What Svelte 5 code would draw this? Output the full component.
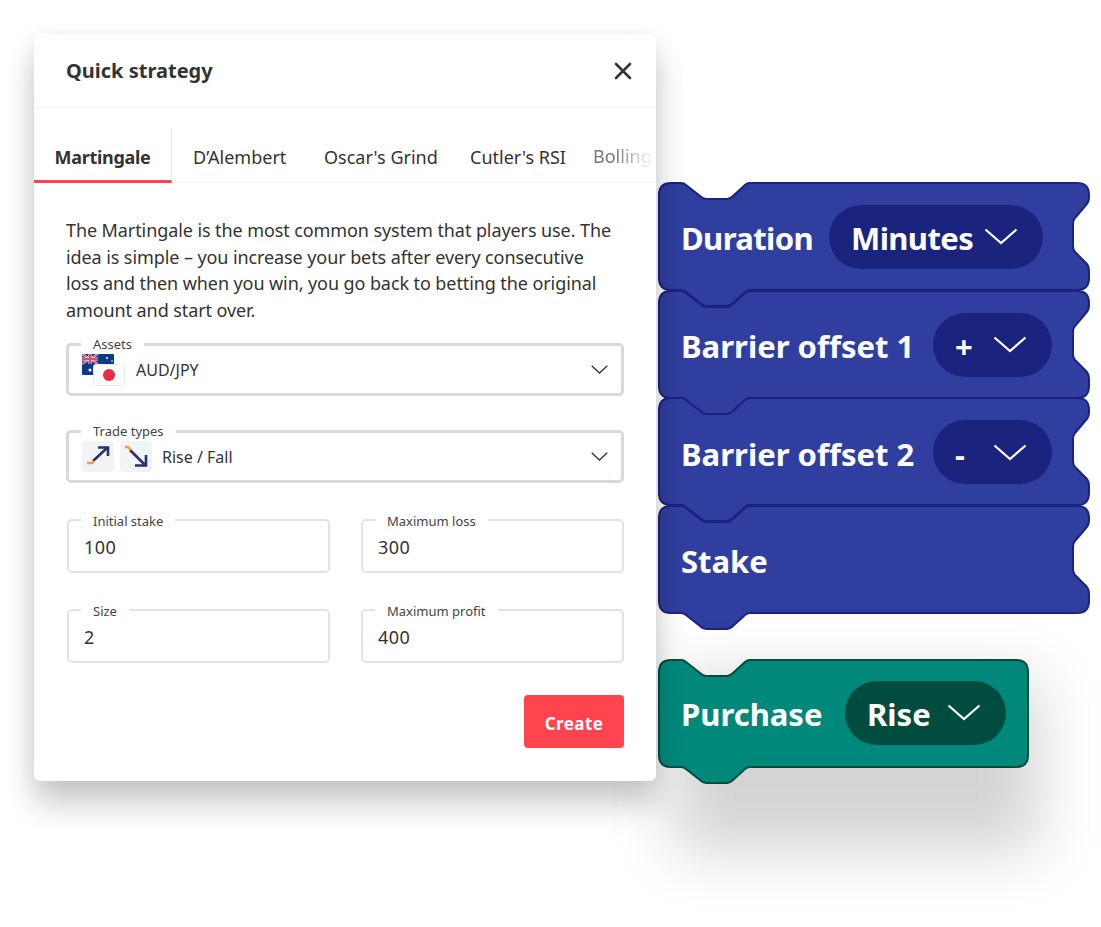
<script>
  const tabs = ["D’Alembert", "Oscar's Grind", "Cutler's RSI"]
  const inputs = [
    { label: 'Initial stake', value: '100' },
    { label: 'Maximum loss', value: '300' },
    { label: 'Size', value: '2' },
    { label: 'Maximum profit', value: '400' }
  ]
  const blocks = [
    { label: 'Duration', pick: 'Minutes', labelWidth: 148, pickWidth: 214, tight: true },
    { label: 'Barrier offset 1', pick: '+', labelWidth: 252, pickWidth: 119 },
    { label: 'Barrier offset 2', pick: '-', labelWidth: 252, pickWidth: 119 },
    { label: 'Stake' }
  ]
  const stackPath = 'M1 13Q1 1 13 1H23Q26 1 28 3L42 14Q45 17 48 17H69Q72 17 75 14L87 3Q89 1 92 1H419Q431 1 431 13V15Q431 20 428 23L417 36Q415 38 415 42V64Q415 68 417 70L428 81Q431 84 431 89V96Q431 108 419 108H92Q89 108 87 110L75 121Q72 124 69 124H48Q45 124 42 121L28 110Q26 108 23 108H13Q1 108 1 96Z'
  const purchasePath = 'M1 13Q1 1 13 1H23Q26 1 28 3L42 14Q45 17 48 17H69Q72 17 75 14L87 3Q89 1 92 1H358Q370 1 370 13V96Q370 108 358 108H92Q89 108 87 110L75 121Q72 124 69 124H48Q45 124 42 121L28 110Q26 108 23 108H13Q1 108 1 96Z'
</script>

{#snippet chevron()}
  <svg class="pick-arrow" width="34" height="17" viewBox="0 0 34 17"><path d="M1.5 1.5 17 15 32.5 1.5" fill="none" stroke="#fff" stroke-width="2.2" /></svg>
{/snippet}

{#snippet small_chevron()}
  <svg class="field-arrow" width="17" height="9" viewBox="0 0 17 9"><path d="M.7.7 8.5 8 16.3.7" fill="none" stroke="#333" stroke-width="1.3" /></svg>
{/snippet}

<main class="page">
  <section class="card">
    <header class="head">
      <h1>Quick strategy</h1>
      <svg width="18" height="18" viewBox="0 0 18 18"><path d="M2 2 16 16M16 2 2 16" stroke="#333" stroke-width="2.6" stroke-linecap="round" /></svg>
    </header>

    <nav class="tabs">
      <span class="tab active">Martingale</span>
      {#each tabs as tab}
        <span class="tab">{tab}</span>
      {/each}
      <span class="tab last">Bollinger</span>
    </nav>

    <div class="body">
      <p class="desc">
        The Martingale is the most common system that players use. The<br />
        idea is simple – you increase your bets after every consecutive<br />
        loss and then when you win, you go back to betting the original<br />
        amount and start over.
      </p>

      <div class="field select">
        <span class="legend">Assets</span>
        <div class="flags">
          <svg class="flag-au" width="32" height="21" viewBox="0 0 32 21">
            <rect width="32" height="21" rx="1" fill="#0a3a8c" />
            <path d="M0 0 16 10M16 0 0 10" stroke="#fff" stroke-width="2" />
            <path d="M0 0 16 10M16 0 0 10" stroke="#e8495c" stroke-width="1.2" />
            <path d="M8 0V10M0 5H16" stroke="#fff" stroke-width="3" />
            <path d="M8 0V10M0 5H16" stroke="#e8495c" stroke-width="2" />
            <circle cx="25" cy="4" r="1" fill="#fff" />
            <circle cx="30" cy="7" r=".8" fill="#fff" />
            <circle cx="8" cy="16" r="1.5" fill="#fff" />
          </svg>
          <svg class="flag-jp" width="32" height="22" viewBox="0 0 32 22">
            <rect x=".5" y=".5" width="31" height="21" rx="2" fill="#fff" stroke="#e6e9e9" />
            <circle cx="16" cy="11" r="6" fill="#eb2a46" />
          </svg>
        </div>
        <span class="value">AUD/JPY</span>
        {@render small_chevron()}
      </div>

      <div class="field select">
        <span class="legend">Trade types</span>
        <span class="trade">
          <svg width="32" height="31" viewBox="0 0 32 31">
            <path d="M11 20 25 7" stroke="#2a3068" stroke-width="2.6" />
            <path d="M16 6.500H26V15" fill="none" stroke="#2a3068" stroke-width="2.6" />
            <path d="M5 22H10L12 20" fill="none" stroke="#ff9933" stroke-width="2.4" />
          </svg>
        </span>
        <span class="trade">
          <svg width="32" height="31" viewBox="0 0 32 31">
            <path d="M10 9 25 24" stroke="#2a3068" stroke-width="2.6" />
            <path d="M26 14V24.500H15" fill="none" stroke="#2a3068" stroke-width="2.6" />
            <path d="M5 6H8L11 9" fill="none" stroke="#ff9933" stroke-width="2.4" />
          </svg>
        </span>
        <span class="value">Rise / Fall</span>
        {@render small_chevron()}
      </div>

      <div class="inputs">
        {#each inputs as input}
          <div class="field input">
            <span class="legend">{input.label}</span>
            <span class="number">{input.value}</span>
          </div>
        {/each}
      </div>

      <div class="actions">
        <button>Create</button>
      </div>
    </div>
  </section>

  <aside class="blocks">
    {#each blocks as block}
      <div class="block" class:tight={block.tight}>
        <svg class="shape" width="432" height="125" viewBox="0 0 432 125"><path d={stackPath} fill="#303f9f" stroke="#1a237e" stroke-width="2" /></svg>
        <span class="block-label" style:width={block.labelWidth ? block.labelWidth + 'px' : null}>{block.label}</span>
        {#if block.pick}
          <span class="pick" style:width={block.pickWidth + 'px'}><span class="pick-text">{block.pick}</span>{@render chevron()}</span>
        {/if}
      </div>
    {/each}

    <div class="block purchase">
      <svg class="shape" width="371" height="125" viewBox="0 0 371 125"><path d={purchasePath} fill="#00897b" stroke="#004d40" stroke-width="2" /></svg>
      <span class="block-label" style:width="164px">Purchase</span>
      <span class="pick" style:width="161px"><span class="pick-text">Rise</span>{@render chevron()}</span>
    </div>
  </aside>
</main>

<style>
  :global(body) {
    background: #fff;
    font-family: "Noto Sans", "Liberation Sans", sans-serif;
    color: #333;
  }
  .page {
    display: flex;
    align-items: flex-start;
    gap: 2px;
    width: 1101px;
    height: 927px;
    padding: 34px 0 0 34px;
    box-sizing: border-box;
    overflow: hidden;
  }
  .card {
    flex: none;
    width: 622px;
    height: 747px;
    background: #fff;
    border-radius: 6px;
    box-shadow: 0 22px 32px rgba(0, 0, 0, 0.22), 0 0 20px rgba(0, 0, 0, 0.05);
    position: relative;
    z-index: 1;
  }
  .head {
    display: flex;
    align-items: center;
    justify-content: space-between;
    height: 73px;
    padding: 0 24px 0 32px;
    border-bottom: 1px solid #f2f3f4;
  }
  h1 {
    margin: 0;
    font-size: 20px;
    font-weight: 700;
  }
  .tabs {
    display: grid;
    grid-template-columns: 138px 152px 146px 123px 63px;
    height: 53px;
    margin-top: 21px;
    border-bottom: 1px solid #f2f3f4;
  }
  .tab {
    font-size: 18px;
    line-height: 56px;
    white-space: nowrap;
  }
  .tab:nth-child(2) {
    padding-left: 21px;
  }
  .tab.active {
    box-sizing: border-box;
    height: 54px;
    text-align: center;
    font-weight: 700;
    letter-spacing: -0.3px;
    border-right: 1px solid #f7dde0;
    border-bottom: 3px solid #ff444f;
  }
  .tab.last {
    margin-top: -1px;
    color: #777;
    overflow: hidden;
    -webkit-mask-image: linear-gradient(90deg, #000 35%, transparent 95%);
    mask-image: linear-gradient(90deg, #000 35%, transparent 95%);
  }
  .body {
    padding: 34px 32px 0;
  }
  .desc {
    margin: 0;
    font-size: 18px;
    line-height: 26.6px;
    letter-spacing: -0.09px;
  }
  .field {
    position: relative;
    display: flex;
    align-items: center;
    box-sizing: border-box;
  }
  .legend {
    position: absolute;
    top: -8px;
    left: 12px;
    padding: 0 12px;
    background: #fff;
    font-size: 13px;
    line-height: 16px;
    color: #444;
  }
  .select {
    height: 53px;
    margin-bottom: 34px;
    padding: 0 13px;
    border: 3px solid #d6dadb;
    border-radius: 5px;
  }
  .select .legend {
    top: -10px;
  }
  .desc + .select {
    margin-top: 20px;
  }
  .flags {
    position: relative;
    width: 54px;
    height: 32px;
    flex: none;
  }
  .flag-au {
    position: absolute;
    left: 0;
    top: 0;
  }
  .flag-jp {
    position: absolute;
    left: 11px;
    top: 10px;
  }
  .trade {
    display: flex;
    margin-right: 6px;
    background: #f2f3f4;
    border-radius: 4px;
  }
  .value {
    font-size: 16px;
  }
  .trade + .value {
    margin-left: 4px;
  }
  .field-arrow {
    margin-left: auto;
  }
  .inputs {
    display: grid;
    grid-template-columns: 263px 263px;
    gap: 36px 31px;
    margin: 36px 0 0 1px;
  }
  .input {
    height: 54px;
    padding: 2px 15px 0;
    border: 2px solid #e0e3e4;
    border-radius: 5px;
  }
  .number {
    font-size: 18px;
    letter-spacing: 0.5px;
  }
  .actions {
    display: flex;
    justify-content: flex-end;
    margin-top: 32px;
  }
  button {
    width: 100px;
    height: 53px;
    padding: 3px 0 0;
    border: 0;
    border-radius: 4px;
    background: #ff444f;
    color: #fff;
    font: 700 17px "Noto Sans", sans-serif;
    letter-spacing: 0.4px;
  }
  .blocks {
    flex: none;
    display: flex;
    flex-direction: column;
    padding-top: 148px;
  }
  .block {
    position: relative;
    display: flex;
    align-items: center;
    width: 432px;
    height: 107.7px;
    padding: 2px 0 0 23px;
    box-sizing: border-box;
    font-weight: 700;
    color: #fff;
  }
  .shape {
    position: absolute;
    left: 0;
    top: 0;
  }
  .block-label,
  .pick {
    position: relative;
    flex: none;
    white-space: nowrap;
    font-size: 31px;
  }
  .block-label,
  .pick-text {
    padding-top: 3px;
  }
  .tight .block-label,
  .tight .pick-text {
    letter-spacing: -0.6px;
  }
  .pick {
    display: flex;
    align-items: center;
    justify-content: space-between;
    box-sizing: border-box;
    height: 64px;
    padding: 0 25px 0 22px;
    border-radius: 32px;
    background: #1a237e;
  }
  .purchase {
    width: 371px;
    margin-top: 46px;
    padding-top: 0;
  }
  .purchase::before {
    content: "";
    position: absolute;
    inset: 20px -10px -85px 15px;
    background: rgba(0, 0, 0, 0.17);
    filter: blur(30px);
  }
  .purchase .pick {
    background: #004d40;
  }
</style>
